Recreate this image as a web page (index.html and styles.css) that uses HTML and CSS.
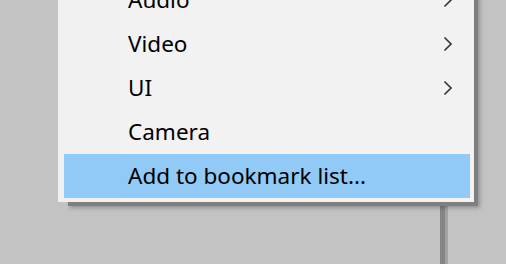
FILE: index.html
```html
<!DOCTYPE html>
<html>
<head>
<meta charset="utf-8">
<link rel="stylesheet" href="styles.css">
</head>
<body>
<div class="desk">
  <div class="spacer"></div>
  <div class="splitter"></div>
</div>
<div class="menu">
  <div class="gutter"></div>
  <div class="item"><span class="label">Audio</span><svg class="chev" width="10" height="16" viewBox="0 0 10 16"><path d="M1.5 1.5 L8 8 L1.5 14.5" fill="none" stroke="#3a3a3a" stroke-width="1.7"/></svg></div>
  <div class="item"><span class="label">Video</span><svg class="chev" width="10" height="16" viewBox="0 0 10 16"><path d="M1.5 1.5 L8 8 L1.5 14.5" fill="none" stroke="#3a3a3a" stroke-width="1.7"/></svg></div>
  <div class="item"><span class="label">UI</span><svg class="chev" width="10" height="16" viewBox="0 0 10 16"><path d="M1.5 1.5 L8 8 L1.5 14.5" fill="none" stroke="#3a3a3a" stroke-width="1.7"/></svg></div>
  <div class="item"><span class="label">Camera</span></div>
  <div class="item active"><span class="label">Add to bookmark list...</span></div>
</div>
</body>
</html>
```
FILE: styles.css
```css
html, body {
  margin: 0;
  padding: 0;
  width: 506px;
  height: 264px;
  overflow: hidden;
  background: #c3c3c3;
}
.desk {
  display: flex;
  height: 264px;
}
.spacer {
  width: 440px;
}
.splitter {
  width: 5px;
  height: 264px;
  background: #858585;
  border-right: 3px solid #a3a3a3;
}
.menu {
  position: absolute;
  left: 58px;
  top: -26px;
  width: 406px;
  padding: 4px 4px 4px 6px;
  background: #f0f0f0;
  box-shadow: 7px 7px 0 -3px #7f7f7f, 9px 9px 4px -3px rgba(0,0,0,0.25);
  font-family: "Noto Sans", "Segoe UI", sans-serif;
  font-size: 22.5px;
  color: #000;
}
.gutter {
  position: absolute;
  left: 62px;
  top: 0;
  bottom: 0;
  right: 0;
  background: #f2f2f2;
}
.item {
  position: relative;
  display: flex;
  align-items: center;
  justify-content: space-between;
  height: 44px;
  padding: 0 17px 0 64px;
}
.item.active {
  background: #91c9f7;
}
.label {
  line-height: 44px;
  white-space: nowrap;
}
.chev {
  display: block;
}
```
